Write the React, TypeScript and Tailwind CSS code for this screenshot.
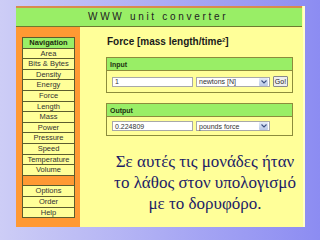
import React from "react";

const nav = [
  "Area",
  "Bits & Bytes",
  "Density",
  "Energy",
  "Force",
  "Length",
  "Mass",
  "Power",
  "Pressure",
  "Speed",
  "Temperature",
  "Volume",
];
const nav2 = ["Options", "Order", "Help"];

function Arrow() {
  return (
    <div className="w-[9px] h-[8px] flex items-center justify-center bg-[linear-gradient(#e4ecf8,#b8c8e6)] rounded-[1px]">
      <svg width="6" height="4" viewBox="0 0 6 4">
        <path d="M0.5 0.5 L3 3 L5.5 0.5" fill="none" stroke="#3b4f80" strokeWidth="1.1" />
      </svg>
    </div>
  );
}

function Box({ title, value, unit, go }: { title: string; value: string; unit: string; go?: boolean }) {
  return (
    <div className="w-[187px] border border-[#8c8c3c] bg-[#ffff99]">
      <div className="h-[13px] bg-[#99ee66] border-b border-[#8c8c3c] flex items-center pl-[3px] text-[7px] leading-none font-bold text-[#223311]">
        {title}
      </div>
      <div className={`${go ? "h-[21px]" : "h-[18px]"} flex items-center pl-[5px] gap-[3px]`}>
        <div className="w-[81px] h-[10px] bg-white border border-[#a8a8a8] flex items-center pl-[2px] text-[7px] leading-none text-[#333]">
          {value}
        </div>
        <div className="w-[74px] h-[10px] bg-white border border-[#a8a8a8] flex items-center justify-between pl-[2px] pr-[1px] text-[7px] leading-none text-[#333]">
          <span>{unit}</span>
          <Arrow />
        </div>
        {go && (
          <div className="w-[15px] h-[11px] bg-[#eeeeee] border border-[#888] rounded-[1px] flex items-center justify-center text-[7px] leading-none text-[#222]">
            Go!
          </div>
        )}
      </div>
    </div>
  );
}

export default function App() {
  return (
    <div
      className="w-[320px] h-[240px] overflow-hidden bg-[linear-gradient(to_right,#cdcdf6,#8c8cf2)] pt-[6px] pl-[16px]"
      style={{ fontFamily: '"Liberation Sans", Arial, sans-serif' }}
    >
      <div className="w-[289px] h-[221px] bg-[#ffff99] flex flex-col border-r-[2px] border-r-[#ffffcc]">
        <div className="h-[21px] shrink-0 mr-[1px] border-t-2 border-t-[#d98a4e] bg-[#99ee66] border-b border-b-[#6e7a30] flex items-center pl-[72px] text-[10px] leading-none tracking-[2.7px] text-[#222]">
          WWW&nbsp;unit&nbsp;converter
        </div>
        <div className="flex flex-1 min-h-0">
          <div className="w-[64px] shrink-0 bg-[#ff9933] pt-[10px] pl-[6px]">
            <div className="w-[53px] h-[181px] border border-[#5c5c2e] flex flex-col overflow-hidden">
              <div className="flex-1 min-h-0 bg-[#99ee66] border-b border-[#5c5c2e] flex items-center justify-center text-[7.5px] leading-none font-bold text-[#1d2a10]">
                Navigation
              </div>
              {nav.map((n) => (
                <div
                  key={n}
                  className="flex-1 min-h-0 bg-[#ffff99] border-b border-[#5c5c2e] flex items-center justify-center text-[7.5px] leading-none text-[#333]"
                >
                  {n}
                </div>
              ))}
              <div className="flex-1 min-h-0 bg-[#ff9933] border-b border-[#5c5c2e]" />
              {nav2.map((n, i) => (
                <div
                  key={n}
                  className={`flex-1 min-h-0 bg-[#ffff99] ${i < 2 ? "border-b border-[#5c5c2e]" : ""} flex items-center justify-center text-[7.5px] leading-none text-[#333]`}
                >
                  {n}
                </div>
              ))}
            </div>
          </div>
          <div className="flex-1 flex flex-col pl-[26px] pt-[9px]">
            <div className="pl-[1px] h-[12px] leading-[12px] text-[10px] font-bold text-[#1a1a1a]">
              Force [mass length/time²]
            </div>
            <div className="mt-[9px]">
              <Box title="Input" value="1" unit="newtons [N]" go />
            </div>
            <div className="mt-[10px]">
              <Box title="Output" value="0.224809" unit="pounds force" />
            </div>
            <div
              className="mt-[15px] w-[198px] text-center text-[17px] leading-[21px] text-[#1c1c66] whitespace-nowrap"
              style={{ fontFamily: '"Liberation Serif", "Times New Roman", serif' }}
            >
              Σε αυτές τις μονάδες ήταν
              <br />
              το λάθος στον υπολογισμό
              <br />
              με το δορυφόρο.
            </div>
          </div>
        </div>
      </div>
    </div>
  );
}
